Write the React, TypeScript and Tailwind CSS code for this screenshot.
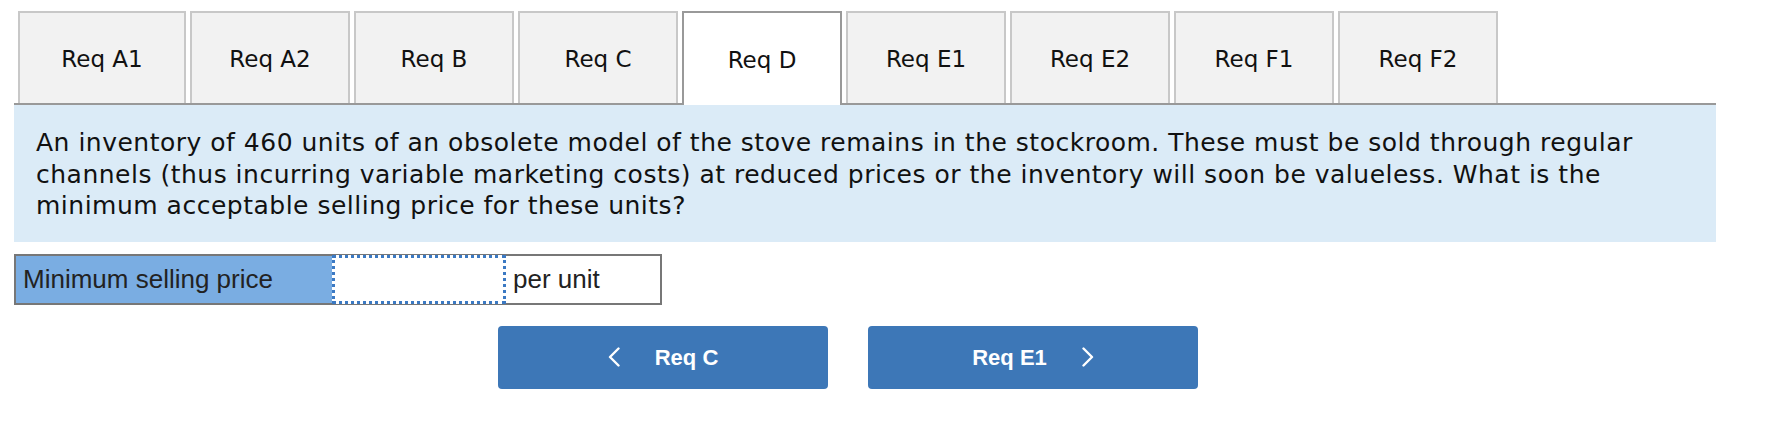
import React from "react";

const tabs = ["Req A1", "Req A2", "Req B", "Req C", "Req D", "Req E1", "Req E2", "Req F1", "Req F2"];
const active = "Req D";

const Chevron = ({ dir }: { dir: "left" | "right" }) => (
  <svg width="12" height="20" viewBox="0 0 12 20" fill="none">
    <polyline
      points={dir === "left" ? "10.5,1.5 2,10 10.5,18.5" : "1.5,1.5 10,10 1.5,18.5"}
      stroke="white"
      strokeWidth="2.4"
      strokeLinecap="round"
      strokeLinejoin="round"
    />
  </svg>
);

export default function App() {
  return (
    <div className="w-[1782px] h-[422px] bg-white pt-[11px] pl-[14px] font-['DejaVu_Sans',Verdana,sans-serif] text-[#111]">
      <div className="w-[1702px]">
        {/* Tabs */}
        <div className="flex gap-[4px] pl-[4px] h-[92px]">
          {tabs.map((t, i) => {
            const on = t === active;
            return (
              <div
                key={t}
                className={`${i === 0 ? "w-[168px]" : "w-[160px]"} flex items-center justify-center text-[23px] border-2 border-b-0 ${
                  on ? "bg-white border-[#999] h-[94px] relative z-10" : "bg-[#f2f2f2] border-[#c8c8c8] h-[92px]"
                }`}
              >
                <span className="mt-[3px]">{t}</span>
              </div>
            );
          })}
        </div>

        {/* Question */}
        <div className="border-t-2 border-[#999] bg-[#dbebf7] pl-[22px] pr-[22px] pt-[22px] pb-[20px] text-[25px] tracking-[0.5px] leading-[31.5px] whitespace-nowrap">
          An inventory of 460 units of an obsolete model of the stove remains in the stockroom. These must be sold through regular
          <br />
          channels (thus incurring variable marketing costs) at reduced prices or the inventory will soon be valueless. What is the
          <br />
          minimum acceptable selling price for these units?
        </div>

        {/* Answer row */}
        <div className="mt-[12px] flex w-[648px] h-[51px] border-2 border-[#777] font-['Liberation_Sans',Arial,sans-serif] text-[26px] text-[#222]">
          <div className="w-[316px] bg-[#7aade2] flex items-center pl-[7px]">Minimum selling price</div>
          <div className="w-[174px] border-[3px] border-dotted border-[#3b79c3] -my-[1px] bg-white" />
          <div className="flex-1 flex items-center pl-[7px] bg-white">per unit</div>
        </div>

        {/* Nav buttons */}
        <div className="mt-[21px] ml-[484px] flex gap-[40px] font-['Liberation_Sans',Arial,sans-serif] font-bold text-[22px] text-white">
          <div className="w-[330px] h-[63px] rounded-[4px] bg-[#3d77b7] flex items-center justify-center gap-[35px]">
            <Chevron dir="left" />
            <span>Req C</span>
          </div>
          <div className="w-[330px] h-[63px] rounded-[4px] bg-[#3d77b7] flex items-center justify-center gap-[35px]">
            <span>Req E1</span>
            <Chevron dir="right" />
          </div>
        </div>
      </div>
    </div>
  );
}
